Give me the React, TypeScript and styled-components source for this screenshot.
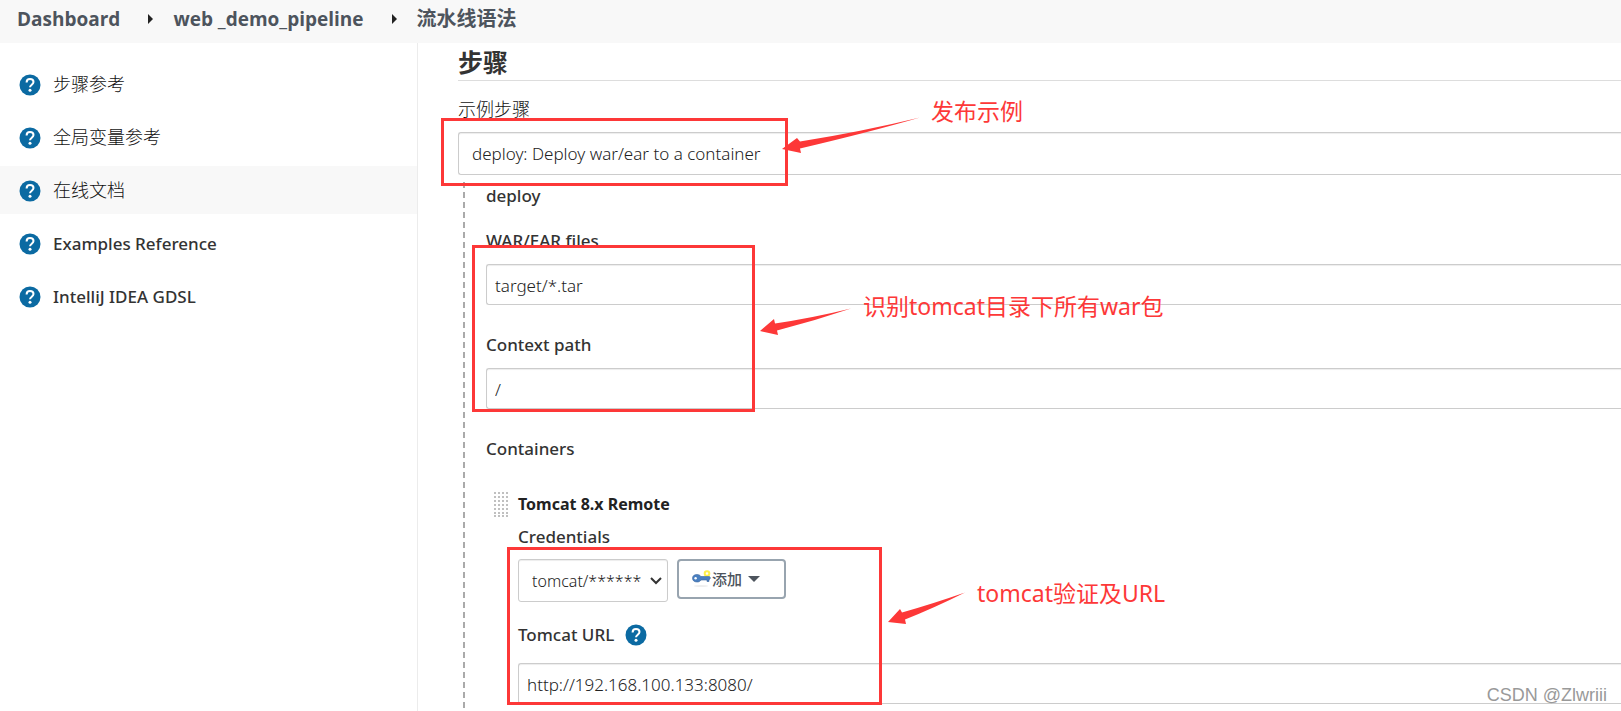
import React from "react";
import styled, { createGlobalStyle } from "styled-components";

const sans = `"Noto Sans", "Noto Sans CJK SC", sans-serif`;
const red = "#fd3838";

const GlobalStyle = createGlobalStyle`
  * { box-sizing: border-box; }
  body { margin: 0; background: #fff; color: #333; font: 400 17px/24px ${sans}; overflow: hidden; }
  button, input, select { font: inherit; color: inherit; }
`;

const Page = styled.div`
  position: relative;
  display: flex;
  flex-direction: column;
  min-height: 100vh;
`;

const Breadcrumbs = styled.nav`
  display: flex;
  align-items: center;
  height: 43px;
  padding: 0 17px 5px;
  background: #f8f8f8;
  font-family: "Open Sans", "Noto Sans CJK SC", sans-serif;
  font-size: 19px;
  font-weight: 700;
  color: #4d545d;
`;

const Crumb = styled.a<{ $cjk?: boolean }>`
  color: inherit;
  font-size: ${(p) => (p.$cjk ? 20 : 19)}px;
  text-decoration: none;
`;

const CrumbArrow = styled.span`
  width: 0;
  margin: 0 20px 0 28px;
  border: solid transparent;
  border-width: 5px 0 5px 5px;
  border-left-color: #222;
`;

const Body = styled.div`
  display: flex;
  flex: 1;
`;

const Sidebar = styled.aside`
  flex: none;
  width: 418px;
  border-right: 1px solid #ececec;
  padding-top: 17px;
  display: flex;
  flex-direction: column;
  gap: 5px;
`;

const Task = styled.a<{ $active?: boolean }>`
  display: flex;
  align-items: center;
  gap: 12px;
  height: 48px;
  padding: 2px 19px 0;
  background: ${(p) => (p.$active ? "#f8f8f8" : "transparent")};
  color: inherit;
  font-weight: 500;
  text-decoration: none;
`;

const CjkText = styled.span`
  color: #111;
  font-size: 18px;
  line-height: 24px;
  font-weight: 300;
`;

const TaskCjkText = styled(CjkText)`
  padding-bottom: 3px;
`;

const Main = styled.main`
  flex: 1;
  min-width: 0;
  padding-left: 40px;
  display: flex;
  flex-direction: column;
`;

const Heading = styled.h2`
  margin: 0 0 16px;
  height: 38px;
  border-bottom: 1px solid #ddd;
  font-size: 25px;
  line-height: 38px;
  font-weight: 700;
`;

const Label = styled.label`
  line-height: 24px;
  font-weight: 500;
`;

const controlStyle = `
  border: 1px solid #ccc;
  background: #fff;
  box-shadow: inset 0 1px 1px rgba(0, 0, 0, 0.075);
  color: #222;
`;

const StepSelect = styled.select`
  ${controlStyle}
  font-weight: 300;
  appearance: none;
  width: 100%;
  height: 43px;
  margin-top: 10px;
  padding: 1px 13px 0;
  border-right: 0;
  border-radius: 3px 0 0 3px;
`;

const TextInput = styled.input`
  ${controlStyle}
  font-weight: 300;
  width: 100%;
  height: 41px;
  padding: 2px 8px 0;
  border-right: 0;
  border-radius: 3px 0 0 3px;
`;

const StepBody = styled.section`
  flex: 1;
  display: flex;
  flex-direction: column;
  margin: 7px 0 0 5px;
  padding-left: 23px;
  background: repeating-linear-gradient(to bottom, #aaa 0 6px, transparent 6px 10px) 0 0 / 2px 100% no-repeat;
`;

const StepTitle = styled.div`
  margin: 2px 0 21px;
  font-weight: 500;
`;

const Field = styled.div`
  display: flex;
  flex-direction: column;
  gap: 11px;
  margin-bottom: 28px;
`;

const Group = styled.div`
  display: flex;
  gap: 10px;
  margin-top: 31px;
  padding-left: 8px;
`;

const GroupContent = styled.div`
  flex: 1;
  min-width: 0;
  display: flex;
  flex-direction: column;
`;

const GroupTitle = styled.div`
  margin-bottom: 9px;
  font-size: 16px;
  font-weight: 700;
  color: #222;
`;

const Row = styled.div`
  display: flex;
  gap: 9px;
  margin: 10px 0 21px;
`;

const CredentialBox = styled.div`
  position: relative;
  width: 150px;
`;

const CredentialSelect = styled.select`
  ${controlStyle}
  font-size: 16px;
  font-weight: 300;
  appearance: none;
  width: 100%;
  height: 43px;
  padding: 1px 13px 0;
  border-radius: 3px;
`;

const Chevron = styled.svg`
  position: absolute;
  right: 6px;
  top: 18px;
  pointer-events: none;
`;

const AddButton = styled.button`
  display: flex;
  align-items: center;
  width: 109px;
  height: 40px;
  padding: 0 13px;
  border: 2px solid #98a4af;
  border-radius: 4px;
  background: #fff;
  color: #4d545d;
  font-size: 15px;
  font-weight: 500;
`;

const Caret = styled.span`
  margin-left: 6px;
  border: solid transparent;
  border-width: 6px 6px 0;
  border-top-color: #4d545d;
`;

const UrlLabel = styled.div`
  display: flex;
  align-items: center;
  gap: 11px;
  margin-bottom: 16px;
`;

const Mark = styled.div<{ $x: number; $y: number; $w: number; $h: number }>`
  position: absolute;
  left: ${(p) => p.$x}px;
  top: ${(p) => p.$y}px;
  width: ${(p) => p.$w}px;
  height: ${(p) => p.$h}px;
  border: 3px solid ${red};
  pointer-events: none;
`;

const Note = styled.div<{ $x: number; $y: number }>`
  position: absolute;
  left: ${(p) => p.$x}px;
  top: ${(p) => p.$y}px;
  color: ${red};
  font-size: 23px;
  line-height: 32px;
  white-space: nowrap;
`;

const Arrows = styled.svg`
  position: absolute;
  left: 0;
  top: 0;
  pointer-events: none;
`;

const Watermark = styled.div`
  position: absolute;
  right: 14px;
  bottom: 4px;
  color: #999;
  font: 400 18px/24px "Liberation Sans", sans-serif;
`;

const HelpIcon = () => (
  <svg width="22" height="22" viewBox="0 0 22 22" aria-hidden="true">
    <circle cx="11" cy="11" r="10.5" fill="#0b6aa2" />
    <path d="M7.6 8.4C7.6 6.2 9 5 11 5s3.500 1.200 3.500 3.100c0 2.500-3.500 2.700-3.500 5.200" fill="none" stroke="#fff" strokeWidth="2" />
    <circle cx="11" cy="16.3" r="1.5" fill="#fff" />
  </svg>
);

const KeyIcon = () => (
  <svg width="20" height="18" viewBox="0 0 20 18" aria-hidden="true">
    <ellipse cx="9" cy="16" rx="7" ry="1" fill="#eee" />
    <circle cx="15" cy="3.500" r="2.300" fill="none" stroke="#fff04a" strokeWidth="2" />
    <path d="M5 4.500c2 0 3 .8 4 2h8.500l1 1.500-1 1.500H17v2h-2v-1.500H9c-1 1.500-2 2-4 2-2.800 0-4.500-1.500-4.500-3.800S2.200 4.500 5 4.500z" fill="#4a7fc0" stroke="#3b669f" strokeWidth=".6" />
    <circle cx="3.600" cy="8.200" r="1.200" fill="#fff" />
  </svg>
);

const DragHandle = () => (
  <svg width="14" height="25" viewBox="0 0 14 25" aria-hidden="true">
    {[0, 4, 8, 12, 16, 20, 23].flatMap((y) =>
      [0, 4, 8, 12].map((x) => <rect key={`${x}-${y}`} x={x} y={y} width="2" height="2" fill="#c0c0c0" />)
    )}
  </svg>
);

const tasks = [
  { name: "步骤参考", cjk: true },
  { name: "全局变量参考", cjk: true },
  { name: "在线文档", cjk: true, active: true },
  { name: "Examples Reference" },
  { name: "IntelliJ IDEA GDSL" },
];

export default function App() {
  return (
    <Page>
      <GlobalStyle />
      <Breadcrumbs>
        <Crumb href="#">Dashboard</Crumb>
        <CrumbArrow />
        <Crumb href="#">web _demo_pipeline</Crumb>
        <CrumbArrow />
        <Crumb href="#" $cjk>流水线语法</Crumb>
      </Breadcrumbs>
      <Body>
        <Sidebar>
          {tasks.map((t) => (
            <Task key={t.name} href="#" $active={t.active}>
              <HelpIcon />
              {t.cjk ? <TaskCjkText>{t.name}</TaskCjkText> : <span>{t.name}</span>}
            </Task>
          ))}
        </Sidebar>
        <Main>
          <Heading>步骤</Heading>
          <Label htmlFor="step">
            <CjkText>示例步骤</CjkText>
          </Label>
          <StepSelect id="step">
            <option>deploy: Deploy war/ear to a container</option>
          </StepSelect>
          <StepBody>
            <StepTitle>deploy</StepTitle>
            <Field>
              <Label htmlFor="war">WAR/EAR files</Label>
              <TextInput id="war" defaultValue="target/*.tar" />
            </Field>
            <Field>
              <Label htmlFor="ctx">Context path</Label>
              <TextInput id="ctx" defaultValue="/" />
            </Field>
            <Label as="div">Containers</Label>
            <Group>
              <DragHandle />
              <GroupContent>
                <GroupTitle>Tomcat 8.x Remote</GroupTitle>
                <Label htmlFor="cred">Credentials</Label>
                <Row>
                  <CredentialBox>
                    <CredentialSelect id="cred">
                      <option>tomcat/******</option>
                    </CredentialSelect>
                    <Chevron width="12" height="8" viewBox="0 0 12 8" aria-hidden="true">
                      <path d="M1 1l5 5 5-5" fill="none" stroke="#333" strokeWidth="2" />
                    </Chevron>
                  </CredentialBox>
                  <AddButton type="button">
                    <KeyIcon />
                    添加
                    <Caret />
                  </AddButton>
                </Row>
                <UrlLabel>
                  <Label htmlFor="url">Tomcat URL</Label>
                  <HelpIcon />
                </UrlLabel>
                <TextInput id="url" defaultValue="http://192.168.100.133:8080/" />
              </GroupContent>
            </Group>
          </StepBody>
        </Main>
      </Body>

      <Mark $x={441} $y={118} $w={347} $h={68} />
      <Mark $x={472} $y={245} $w={283} $h={167} />
      <Mark $x={507} $y={547} $w={375} $h={158} />
      <Arrows width="1000" height="640" viewBox="0 0 1000 640" fill={red} aria-hidden="true">
        <path d="M782 149L797 138 800 141.500Q860 132 920 117.500 870 132 800 148.500L801 153z" />
        <path d="M760 331L774 319 775 323.500Q812 318 851 308.500 814 321 777 330.500L778 335z" />
        <path d="M888 622L900 609 902 612.500Q932 604 965 592.500 934 608 905 619.500L906 624z" />
      </Arrows>
      <Note $x={931} $y={95}>发布示例</Note>
      <Note $x={863} $y={290}>识别tomcat目录下所有war包</Note>
      <Note $x={977} $y={577}>tomcat验证及URL</Note>
      <Watermark>CSDN @Zlwriii</Watermark>
    </Page>
  );
}
